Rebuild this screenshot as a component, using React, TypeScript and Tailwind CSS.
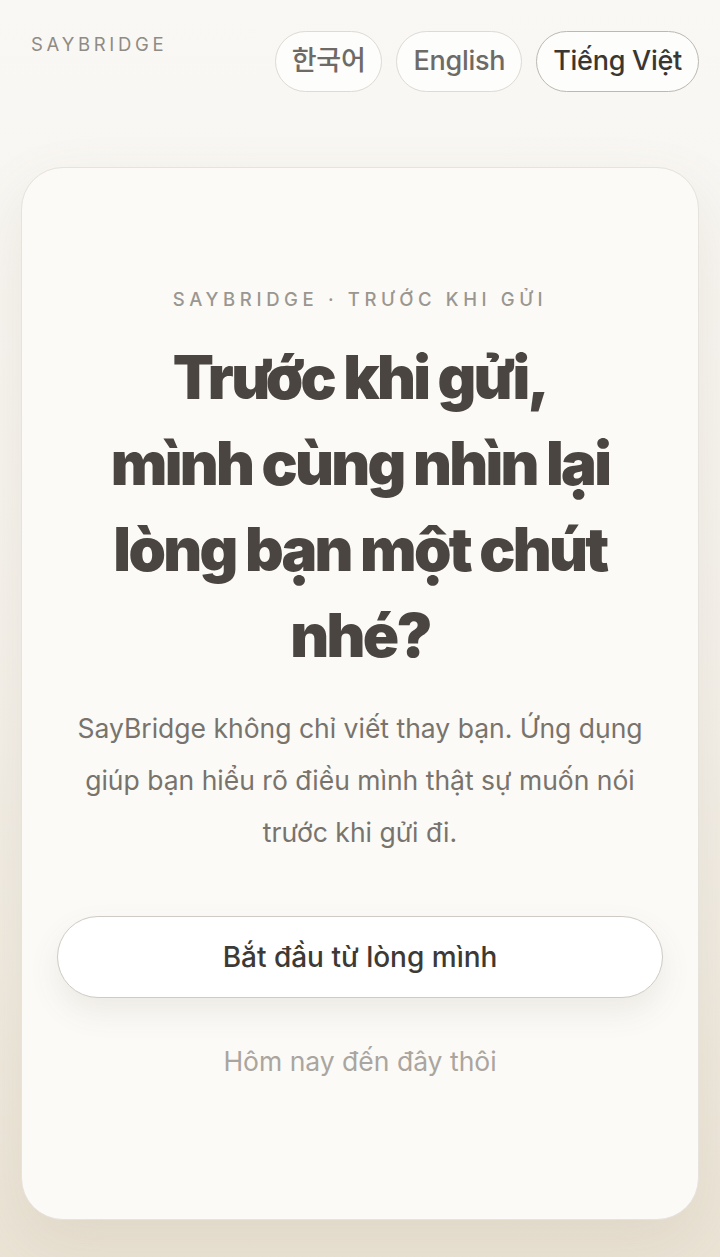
const sans = "font-['Inter','Noto_Sans','Noto_Sans_CJK_KR',sans-serif]";

const languages = [
  { label: "한국어", active: false },
  { label: "English", active: false },
  { label: "Tiếng Việt", active: true },
];

export default function App() {
  return (
    <div
      className={`${sans} min-h-[1257px] w-full bg-gradient-to-b from-[#f9f8f5] via-[#f5f2ec] to-[#ebe4d6] px-[21px] pt-[31px] pb-[37px]`}
    >
      {/* header */}
      <header className="flex items-start justify-between">
        <div className="pl-[10px] text-[18.5px] leading-[26px] font-normal tracking-[0.2em] text-[#8f8b85]">
          SAYBRIDGE
        </div>
        <div className="flex gap-[14px]">
          {languages.map((lang) => (
            <button
              key={lang.label}
              className={`h-[61px] rounded-full border bg-white/70 px-[16px] text-[27px] font-medium tracking-[-0.01em] ${
                lang.active
                  ? "border-[#bdb8b1] text-[#3a3733]"
                  : "border-[#dedad4] text-[#6e6a65]"
              }`}
            >
              {lang.label}
            </button>
          ))}
        </div>
      </header>

      {/* card */}
      <main className="mt-[75px] flex min-h-[1053px] flex-col items-center rounded-[42px] border border-[#e6e2dc] bg-[#fbfaf7] px-[35px] pt-[118px] shadow-[0_24px_60px_rgba(140,115,80,0.12)]">
        <p className="text-[18.5px] font-medium tracking-[0.25em] text-[#9a9690]">
          SAYBRIDGE · TRƯỚC KHI GỬI
        </p>
        <h1 className="mt-[20px] text-center text-[60px] font-black leading-[86px] tracking-[-0.045em] text-[#4a4540]">
          Trước khi gửi,
          <br />
          mình cùng nhìn lại
          <br />
          lòng bạn một chút
          <br />
          nhé?
        </h1>
        <p className="mt-[24px] text-center text-[26.5px] leading-[52px] text-[#78736c]">
          SayBridge không chỉ viết thay bạn. Ứng dụng
          <br />
          giúp bạn hiểu rõ điều mình thật sự muốn nói
          <br />
          trước khi gửi đi.
        </p>
        <button className="mt-[58px] h-[82px] w-full rounded-full border border-[#cfcac3] bg-white text-[28px] font-medium text-[#3d3a36] shadow-[0_14px_30px_rgba(120,100,70,0.1)]">
          Bắt đầu từ lòng mình
        </button>
        <button className="mt-[44px] text-[26.5px] text-[#aaa59e]">
          Hôm nay đến đây thôi
        </button>
      </main>
    </div>
  );
}
